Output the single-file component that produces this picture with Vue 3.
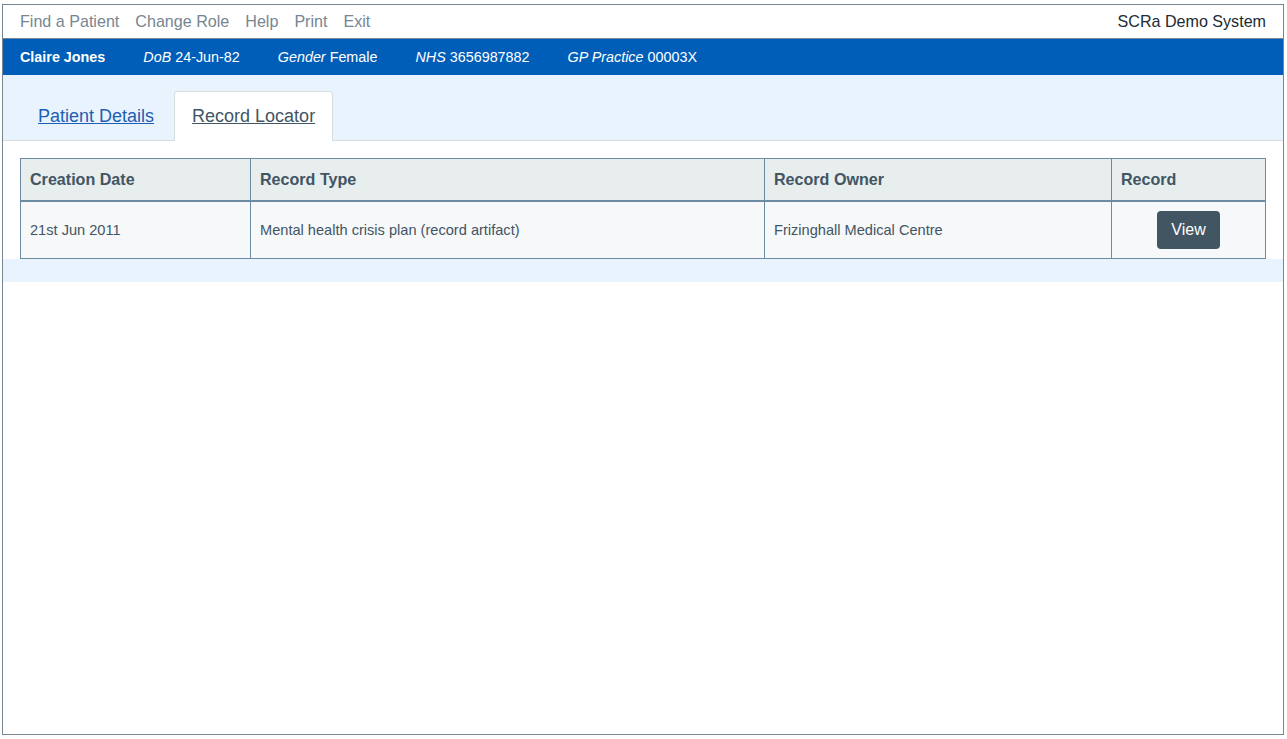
<template>
  <div class="frame">
    <nav class="topnav">
      <div class="links">
        <a v-for="link in links" :key="link" href="#">{{ link }}</a>
      </div>
      <span class="system">SCRa Demo System</span>
    </nav>

    <div class="banner">
      <strong class="name">Claire Jones</strong>
      <span v-for="item in patient" :key="item.label"><em>{{ item.label }}</em> {{ item.value }}</span>
    </div>

    <div class="panel">
      <div class="tabs">
        <a href="#" class="tab">Patient Details</a>
        <a href="#" class="tab active">Record Locator</a>
      </div>

      <div class="content">
        <table>
          <colgroup>
            <col class="c1" />
            <col class="c2" />
            <col class="c3" />
            <col class="c4" />
          </colgroup>
          <thead>
            <tr>
              <th>Creation Date</th>
              <th>Record Type</th>
              <th>Record Owner</th>
              <th>Record</th>
            </tr>
          </thead>
          <tbody>
            <tr>
              <td>21st Jun 2011</td>
              <td>Mental health crisis plan (record artifact)</td>
              <td>Frizinghall Medical Centre</td>
              <td class="action"><button type="button">View</button></td>
            </tr>
          </tbody>
        </table>
      </div>
    </div>
  </div>
</template>

<script setup>
const links = ['Find a Patient', 'Change Role', 'Help', 'Print', 'Exit'];

const patient = [
  { label: 'DoB', value: '24-Jun-82' },
  { label: 'Gender', value: 'Female' },
  { label: 'NHS', value: '3656987882' },
  { label: 'GP Practice', value: '00003X' }
];
</script>

<style>
html,
body {
  margin: 0;
  background: #fff;
}
</style>

<style scoped>
.frame {
  box-sizing: border-box;
  width: 1282px;
  height: 731px;
  margin: 4px 0 0 2px;
  border: 1px solid #768692;
  background: #fff;
  font-family: "Liberation Sans", Arial, sans-serif;
}

.topnav {
  box-sizing: border-box;
  height: 34px;
  display: flex;
  justify-content: space-between;
  align-items: center;
  padding: 0 17px;
  border-bottom: 1px solid #768692;
  font-size: 16.1px;
}

.links {
  display: flex;
  gap: 16px;
}

.links a {
  color: #768692;
  text-decoration: none;
}

.system {
  color: #212b32;
}

.banner {
  box-sizing: border-box;
  height: 36px;
  display: flex;
  align-items: center;
  gap: 38px;
  padding: 0 17px;
  background: #005eb8;
  color: #fff;
  font-size: 14.35px;
}

.panel {
  background: #e9f3fe;
  padding-bottom: 23px;
}

.tabs {
  box-sizing: border-box;
  height: 66px;
  display: flex;
  align-items: flex-end;
  padding: 16px 0 0 17px;
  border-bottom: 1px solid #d8dde0;
}

.tab {
  box-sizing: border-box;
  height: 50px;
  line-height: 52px;
  padding: 0 18px;
  font-size: 18px;
  color: #1d5fb4;
}

.tab.active {
  margin-left: 2px;
  margin-bottom: -1px;
  padding: 0 17px;
  line-height: 48px;
  border: 1px solid #d8dde0;
  border-bottom: 0;
  border-radius: 4px 4px 0 0;
  background: #fff;
  color: #425563;
}

.content {
  background: #fff;
  padding: 17px 17px 0;
}

table {
  width: 1246px;
  table-layout: fixed;
  border-collapse: collapse;
  font-size: 14.6px;
  color: #425563;
}

.c1 {
  width: 230px;
}

.c2 {
  width: 514px;
}

.c3 {
  width: 347px;
}

.c4 {
  width: 154px;
}

th,
td {
  border: 1px solid #6b8ba3;
  padding: 0 9px;
  text-align: left;
}

th {
  height: 41px;
  background: #e8edee;
  border-bottom-width: 2px;
  font-size: 16.1px;
}

td {
  height: 56px;
  background: #f6f8fa;
}

.action {
  text-align: center;
}

button {
  width: 63px;
  height: 38px;
  border: 0;
  border-radius: 4px;
  background: #425563;
  color: #fff;
  font: 16px "Liberation Sans", Arial, sans-serif;
  vertical-align: middle;
}
</style>
